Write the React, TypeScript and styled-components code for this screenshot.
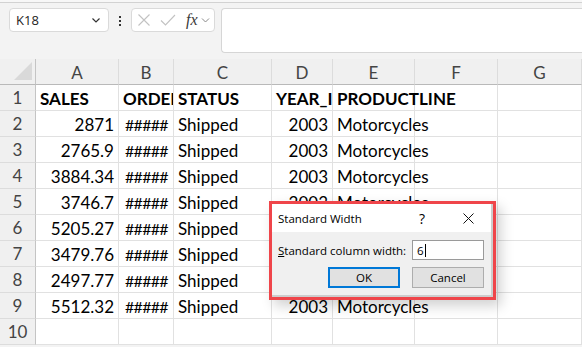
import React from "react";
import styled, { createGlobalStyle } from "styled-components";

const GlobalStyle = createGlobalStyle`
  html, body {
    margin: 0;
    padding: 0;
    background: #ffffff;
  }
  * {
    box-sizing: border-box;
  }
`;

const columns = ["A", "B", "C", "D", "E", "F", "G"];

// text, align, clip overflow at the cell edge
type CellData = { text: string; align?: "left" | "right"; clip?: boolean; fill?: boolean };

const headerRow: CellData[] = [
  { text: "SALES" },
  { text: "ORDERNUMBER", clip: true },
  { text: "STATUS" },
  { text: "YEAR_ID", clip: true },
  { text: "PRODUCTLINE" },
  { text: "" },
  { text: "" },
];

const sales = ["2871", "2765.9", "3884.34", "3746.7", "5205.27", "3479.76", "2497.77", "5512.32"];

const dataRows: CellData[][] = sales.map((s) => [
  { text: s, align: "right" },
  { text: "#####", clip: true, fill: true },
  { text: "Shipped" },
  { text: "2003", align: "right" },
  { text: "Motorcycles" },
  { text: "" },
  { text: "" },
]);

const emptyRow: CellData[] = columns.map(() => ({ text: "" }));

const App = () => {
  const rows = [headerRow, ...dataRows, emptyRow];

  return (
    <Screen>
      <GlobalStyle />
      <TopStrip />
      <Toolbar>
        <NameBox>
          <span>K18</span>
          <svg width="12" height="12" viewBox="0 0 12 12">
            <path d="M2.5 4.5 L6 8 L9.5 4.5" fill="none" stroke="#333" strokeWidth="1.2" />
          </svg>
        </NameBox>
        <Dots>
          <i />
          <i />
          <i />
        </Dots>
        <FxBox>
          <svg width="14" height="14" viewBox="0 0 14 14">
            <path d="M1.5 1.5 L12.5 12.5 M12.5 1.5 L1.5 12.5" stroke="#c2c2c2" strokeWidth="1.1" />
          </svg>
          <svg width="16" height="14" viewBox="0 0 16 14">
            <path d="M1 7.5 L5.5 12 L15 2" fill="none" stroke="#c2c2c2" strokeWidth="1.1" />
          </svg>
          <FxLabel>fx</FxLabel>
          <svg width="9" height="8" viewBox="0 0 9 8">
            <path d="M1 2.5 L4.5 6 L8 2.5" fill="none" stroke="#8a8a8a" strokeWidth="1" />
          </svg>
        </FxBox>
        <FormulaInput />
      </Toolbar>

      <Sheet>
        <Corner>
          <svg width="18" height="18" viewBox="0 0 18 18">
            <polygon points="18,0 18,18 0,18" fill="#d9d9d9" />
          </svg>
        </Corner>
        {columns.map((c) => (
          <ColHeader key={c}>{c}</ColHeader>
        ))}
        {rows.map((row, r) => (
          <React.Fragment key={r}>
            <RowHeader>{r + 1}</RowHeader>
            {row.map((cell, c) => (
              <Cell
                key={c}
                $align={cell.align}
                $clip={cell.clip}
                $fill={cell.fill}
                $bold={r === 0}
              >
                {cell.text}
              </Cell>
            ))}
          </React.Fragment>
        ))}
      </Sheet>

      <Highlight>
        <Dialog>
          <TitleBar>
            <span>Standard Width</span>
            <TitleButtons>
              <span>?</span>
              <svg width="11" height="11" viewBox="0 0 11 11">
                <path d="M0.5 0.5 L10.5 10.5 M10.5 0.5 L0.5 10.5" stroke="#111" strokeWidth="1" />
              </svg>
            </TitleButtons>
          </TitleBar>
          <DialogBody>
            <FieldRow>
              <label>
                <u>S</u>tandard column width:
              </label>
              <WidthInput>
                <span>6</span>
                <Caret />
              </WidthInput>
            </FieldRow>
            <ButtonRow>
              <DialogButton $primary>OK</DialogButton>
              <DialogButton>Cancel</DialogButton>
            </ButtonRow>
          </DialogBody>
        </Dialog>
      </Highlight>
    </Screen>
  );
};

export default App;

const Screen = styled.div`
  position: relative;
  width: 582px;
  height: 347px;
  overflow: hidden;
  background: #f3f3f3;
  font-family: Lato, "Liberation Sans", sans-serif;
`;

const TopStrip = styled.div`
  height: 3px;
  background: #f7f7f7;
  border-bottom: 1px solid #d2d2d2;
`;

const Toolbar = styled.div`
  display: flex;
  align-items: flex-start;
  height: 56px;
  padding: 5px 0 0 9px;
`;

const NameBox = styled.div`
  display: flex;
  align-items: center;
  justify-content: space-between;
  width: 100px;
  height: 24px;
  padding: 0 6px 0 6px;
  background: #ffffff;
  border: 1px solid #dadada;
  border-radius: 4px;
  font-family: "Open Sans", "Noto Sans", sans-serif;
  font-size: 13px;
  color: #222;
`;

const Dots = styled.div`
  display: flex;
  flex-direction: column;
  gap: 2px;
  width: 22px;
  align-items: center;
  padding-top: 8px;

  i {
    display: block;
    width: 2px;
    height: 2px;
    background: #333;
  }
`;

const FxBox = styled.div`
  display: flex;
  align-items: center;
  gap: 9px;
  width: 84px;
  height: 24px;
  padding: 0 4px 0 5px;
  background: #ffffff;
  border: 1px solid #dadada;
  border-radius: 4px;
`;

const FxLabel = styled.span`
  font-family: "Liberation Serif", "DejaVu Serif", serif;
  font-style: italic;
  font-size: 16px;
  color: #3a3a3a;
  margin-right: -6px;
  margin-left: 1px;
`;

const FormulaInput = styled.div`
  flex: 1;
  margin-left: 6px;
  height: 45px;
  background: #ffffff;
  border: 1px solid #d6d6d6;
  border-right: none;
  border-radius: 4px 0 0 4px;
`;

const Sheet = styled.div`
  display: grid;
  grid-template-columns: 36px 83px 55px 98px 61px 82px 83px 1fr;
  grid-auto-rows: 26px;
  background: #ffffff;
`;

const HeaderBase = styled.div`
  display: flex;
  align-items: center;
  justify-content: center;
  background: #f0f0f0;
  color: #444;
  font-size: 17px;
`;

const Corner = styled(HeaderBase)`
  justify-content: flex-end;
  align-items: flex-end;
  padding: 0 3px 4px 0;
  border-right: 1px solid #c4c4c4;
  border-bottom: 1px solid #b9b9b9;
`;

const ColHeader = styled(HeaderBase)`
  padding-top: 2px;
  border-right: 1px solid #dcdcdc;
  border-bottom: 1px solid #b9b9b9;
`;

const RowHeader = styled(HeaderBase)`
  border-right: 1px solid #c4c4c4;
  border-bottom: 1px solid #dcdcdc;
`;

const Cell = styled.div<{ $align?: "left" | "right"; $clip?: boolean; $fill?: boolean; $bold?: boolean }>`
  display: flex;
  align-items: center;
  justify-content: ${(p) => (p.$align === "right" ? "flex-end" : "flex-start")};
  padding: 1px 4px 0 ${(p) => (p.$fill ? "6px" : "4px")};
  white-space: nowrap;
  overflow: ${(p) => (p.$clip ? "hidden" : "visible")};
  border-right: 1px solid #e1e1e1;
  border-bottom: 1px solid #e1e1e1;
  font-size: ${(p) => (p.$fill ? "16px" : "17px")};
  letter-spacing: ${(p) => (p.$fill ? "-0.7px" : "0")};
  font-weight: ${(p) => (p.$bold ? 700 : 400)};
  color: #000;
`;

const Highlight = styled.div`
  position: absolute;
  left: 269px;
  top: 201px;
  width: 227px;
  height: 99px;
  border: 3px solid #ef454a;
  box-shadow: 5px 6px 12px rgba(0, 0, 0, 0.18);
  background: #f0f0f0;
`;

const Dialog = styled.div`
  display: flex;
  flex-direction: column;
  height: 100%;
  background: #f0f0f0;
  border-right: 2px solid #cdcdcd;
  border-bottom: 2px solid #cdcdcd;
  font-family: "Open Sans", "Noto Sans", sans-serif;
  font-size: 11.5px;
  color: #000;
`;

const TitleBar = styled.div`
  display: flex;
  align-items: center;
  justify-content: space-between;
  height: 28px;
  padding: 0 17px 0 6px;
  background: #ffffff;
`;

const TitleButtons = styled.div`
  display: flex;
  align-items: center;
  gap: 38px;
  font-size: 14px;
`;

const DialogBody = styled.div`
  display: flex;
  flex-direction: column;
  gap: 7px;
  padding: 8px 7px 0 6px;
`;

const FieldRow = styled.div`
  display: flex;
  align-items: center;
  justify-content: space-between;
`;

const WidthInput = styled.div`
  display: flex;
  align-items: center;
  width: 72px;
  height: 20px;
  padding-left: 4px;
  background: #ffffff;
  border: 1px solid #9a9a9a;
`;

const Caret = styled.span`
  display: inline-block;
  width: 1px;
  height: 13px;
  margin-left: 1px;
  background: #000;
`;

const ButtonRow = styled.div`
  display: flex;
  justify-content: flex-end;
  gap: 12px;
`;

const DialogButton = styled.div<{ $primary?: boolean }>`
  display: flex;
  align-items: center;
  justify-content: center;
  width: 72px;
  height: 21px;
  background: #e1e1e1;
  border: ${(p) => (p.$primary ? "2px solid #0078d7" : "1px solid #adadad")};
`;
